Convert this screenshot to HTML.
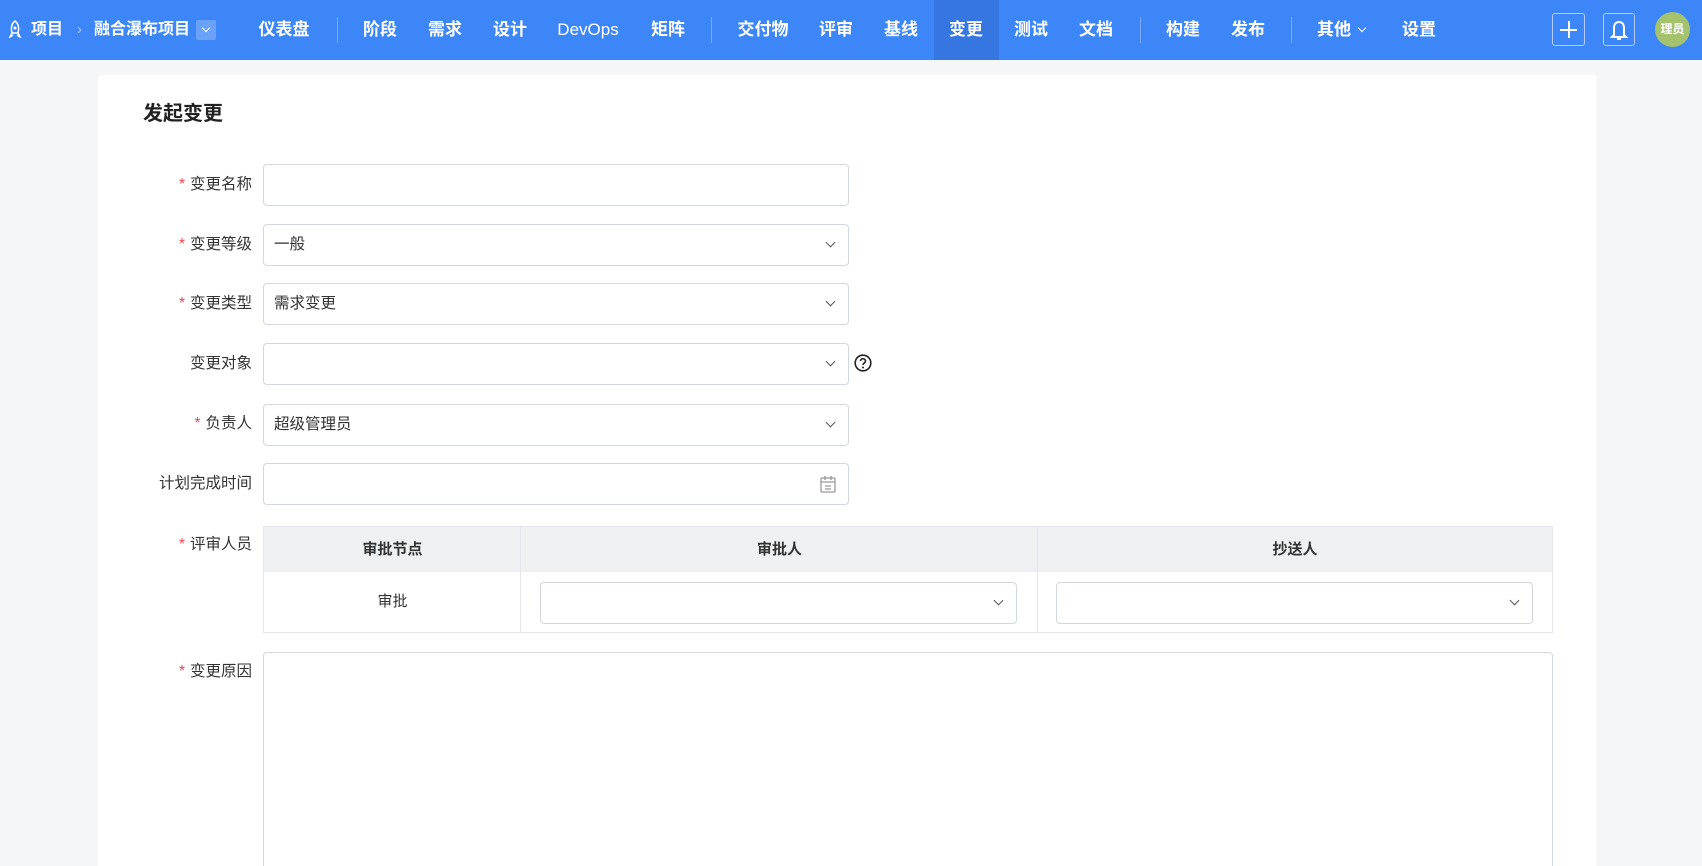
<!DOCTYPE html>
<html style="width:1702px;height:866px;overflow:hidden"><head><meta charset="utf-8"><style>
*{box-sizing:border-box;margin:0;padding:0}
body{width:1702px;height:866px;overflow:hidden;background:#f5f6f8;font-family:"Liberation Sans","Noto Sans CJK SC",sans-serif;color:#333;position:relative}
.nav{position:absolute;left:0;top:0;width:1702px;height:60px;background:#3d86f8}
.nav .t{position:absolute;top:0;height:60px;line-height:60px;color:#fff;font-size:17px;font-weight:bold;transform:translateX(-50%);white-space:nowrap}
.nav .d{position:absolute;top:17px;width:1px;height:26px;background:rgba(255,255,255,.3)}
.act{position:absolute;left:934px;top:0;width:65px;height:60px;background:#3576e0}
.card{position:absolute;left:98px;top:75px;width:1499px;height:800px;background:#fff;border-radius:4px}
.title{position:absolute;left:143px;top:97px;font-size:20px;font-weight:bold;color:#222}
.lbl{position:absolute;right:1450px;font-size:15.5px;color:#333;white-space:nowrap;line-height:20px}
.lbl i{color:#f5464b;font-style:normal;margin-right:5px}
.inp{position:absolute;left:263px;width:586px;height:42px;border:1px solid #d4d7e0;border-radius:4px;background:#fff;font-size:15.5px;line-height:40px;padding-left:10px;color:#333}
.chev{position:absolute;right:14px;top:14px;width:7px;height:7px;border-right:1.5px solid #555;border-bottom:1.5px solid #555;transform:rotate(45deg)}
.tbl{position:absolute;left:263px;top:526px;width:1290px;height:107px;border:1px solid #e4e6eb}
.th{position:absolute;top:0;height:45px;background:#eff0f2;line-height:45px;text-align:center;font-size:15px;font-weight:bold;color:#333}
.vl{position:absolute;top:0;width:1px;height:106px;background:#e4e6eb}
</style></head><body>
<div class="nav">
 <div class="act"></div>
 <svg style="position:absolute;left:8px;top:20px" width="14" height="18" viewBox="0 0 14 18"><path d="M7 1 C3 4 3 9 4 13 L10 13 C11 9 11 4 7 1Z M4 13 L2 17 L5 15 M10 13 L12 17 L9 15" fill="none" stroke="#fff" stroke-width="1.5"/><circle cx="7" cy="8" r="1.5" fill="#fff"/></svg>
 <div class="t" style="left:31px;transform:none;font-size:16px">项目</div>
 <div class="t" style="left:77px;transform:none;font-size:15px;color:#a8c8ff;font-weight:normal">›</div>
 <div class="t" style="left:94px;transform:none;font-size:16px">融合瀑布项目</div>
 <div style="position:absolute;left:196px;top:20px;width:20px;height:20px;background:#6aa2fa;border-radius:2px"><div style="position:absolute;left:7px;top:5px;width:6px;height:6px;border-right:1.5px solid #fff;border-bottom:1.5px solid #fff;transform:rotate(45deg)"></div></div>
 <div class="t" style="left:284px">仪表盘</div>
 <div class="d" style="left:337px"></div>
 <div class="t" style="left:380px">阶段</div>
 <div class="t" style="left:445px">需求</div>
 <div class="t" style="left:510px">设计</div>
 <div class="t" style="left:588px;font-weight:normal">DevOps</div>
 <div class="t" style="left:668px">矩阵</div>
 <div class="d" style="left:711px"></div>
 <div class="t" style="left:763px">交付物</div>
 <div class="t" style="left:836px">评审</div>
 <div class="t" style="left:901px">基线</div>
 <div class="t" style="left:966px">变更</div>
 <div class="t" style="left:1031px">测试</div>
 <div class="t" style="left:1096px">文档</div>
 <div class="d" style="left:1140px"></div>
 <div class="t" style="left:1183px">构建</div>
 <div class="t" style="left:1248px">发布</div>
 <div class="d" style="left:1291px"></div>
 <div class="t" style="left:1335px;left:1317px;transform:none">其他</div>
 <div style="position:absolute;left:1359px;top:25px;width:6px;height:6px;border-right:1.3px solid #fff;border-bottom:1.3px solid #fff;transform:rotate(45deg)"></div>
 <div class="t" style="left:1419px">设置</div>
 <div style="position:absolute;left:1552px;top:13px;width:33px;height:33px;border:1px solid rgba(255,255,255,.6);border-radius:3px"><div style="position:absolute;left:7px;top:15px;width:17px;height:2px;background:#fff"></div><div style="position:absolute;left:15px;top:7px;width:2px;height:17px;background:#fff"></div></div>
 <div style="position:absolute;left:1603px;top:13px;width:32px;height:33px;border:1px solid rgba(255,255,255,.6);border-radius:3px"><svg width="30" height="31" viewBox="0 0 30 31"><path d="M10 21 L10 14 C10 10 12 8 15 8 C18 8 20 10 20 14 L20 21 L22 23 L8 23 Z" fill="none" stroke="#fff" stroke-width="2"/><path d="M13 25 L17 25" stroke="#fff" stroke-width="2"/></svg></div>
 <div style="position:absolute;left:1655px;top:12px;width:35px;height:35px;border-radius:50%;background:#a5c36c;color:#fff;font-size:12px;font-weight:bold;line-height:35px;text-align:center">理员</div>
</div>
<div class="card"></div>
<div class="title">发起变更</div>

<div class="lbl" style="top:175px"><i>*</i>变更名称</div>
<div class="inp" style="top:164px"></div>
<div class="lbl" style="top:235px"><i>*</i>变更等级</div>
<div class="inp" style="top:224px">一般<span class="chev"></span></div>
<div class="lbl" style="top:294px"><i>*</i>变更类型</div>
<div class="inp" style="top:283px">需求变更<span class="chev"></span></div>
<div class="lbl" style="top:354px">变更对象</div>
<div class="inp" style="top:343px"><span class="chev"></span></div>
<svg style="position:absolute;left:854px;top:354px" width="18" height="18" viewBox="0 0 18 18"><circle cx="9" cy="9" r="7.8" fill="none" stroke="#222" stroke-width="1.6"/><path d="M6.5 7 C6.5 4 11.5 4 11.5 7 C11.5 9 9 9 9 11" fill="none" stroke="#222" stroke-width="1.6"/><circle cx="9" cy="13.5" r="1" fill="#222"/></svg>
<div class="lbl" style="top:414px"><i>*</i>负责人</div>
<div class="inp" style="top:404px">超级管理员<span class="chev"></span></div>
<div class="lbl" style="top:474px">计划完成时间</div>
<div class="inp" style="top:463px"><svg style="position:absolute;right:11px;top:11px" width="18" height="19" viewBox="0 0 18 19"><rect x="2" y="3" width="14" height="14" rx="1" fill="none" stroke="#999" stroke-width="1.3"/><path d="M6 1V5M12 1V5M2 7H16M6 11H12M6 14H12" stroke="#999" stroke-width="1.3"/></svg></div>

<div class="lbl" style="top:535px"><i>*</i>评审人员</div>
<div class="tbl">
 <div class="th" style="left:0;width:1288px"></div>
 <div class="th" style="left:0;width:257px;background:none">审批节点</div>
 <div class="th" style="left:257px;width:517px;background:none">审批人</div>
 <div class="th" style="left:774px;width:514px;background:none">抄送人</div>
 <div class="vl" style="left:256px"></div>
 <div class="vl" style="left:773px"></div>
 <div style="position:absolute;left:0;top:45px;width:257px;height:60px;line-height:60px;text-align:center;font-size:15px">审批</div>
 <div class="inp" style="left:276px;top:55px;width:477px;height:42px"><span class="chev"></span></div>
 <div class="inp" style="left:792px;top:55px;width:477px;height:42px"><span class="chev"></span></div>
</div>
<div class="lbl" style="top:662px"><i>*</i>变更原因</div>
<div class="inp" style="top:652px;width:1290px;height:240px"></div>
</body></html>
